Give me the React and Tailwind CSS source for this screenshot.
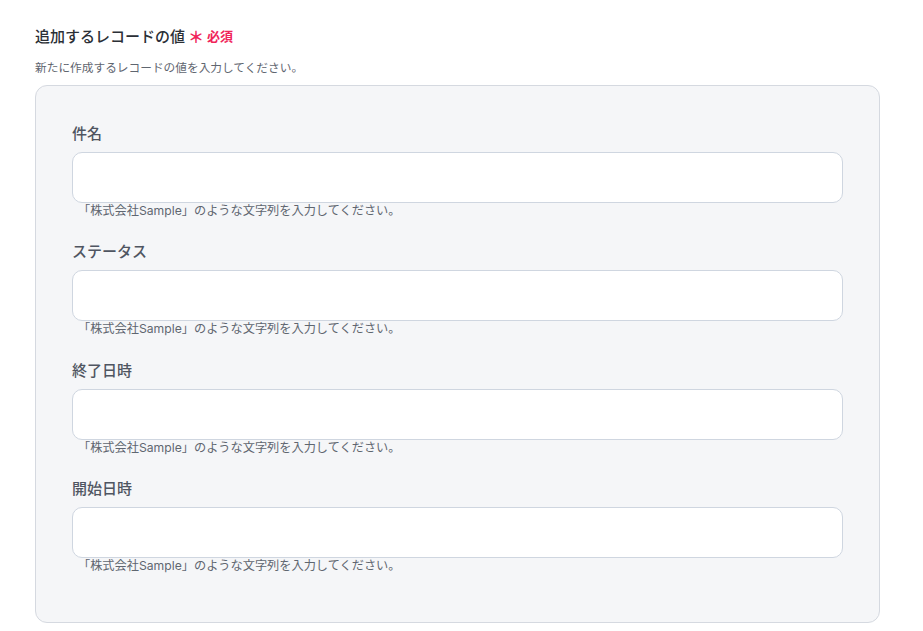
import React from 'react';

const fields = ['件名', 'ステータス', '終了日時', '開始日時'];

const RecordField = ({ label }) => (
    <div className="flex flex-col">
        <label className="text-[15px] leading-5 font-medium text-[#4f5561] mb-2">{label}</label>
        <input
            type="text"
            className="h-[51px] w-full bg-white border border-[#cfd6e0] rounded-[10px] px-4 text-sm outline-none"
        />
        <p className="text-[12.2px] leading-4 text-[#5f6670] pl-[6px]">
            「株式会社Sample」のような文字列を入力してください。
        </p>
    </div>
);

export default function App() {
    return (
        <div
            className="min-h-screen bg-white pt-[26px] pl-[35px] pr-[43px] pb-2"
            style={{ fontFamily: 'Inter, "Noto Sans CJK JP", "Noto Sans", sans-serif' }}
        >
            <div className="flex items-center h-[22px]">
                <h2 className="text-[15px] font-medium text-[#2b2f36]">追加するレコードの値</h2>
                <span className="ml-[3px] mr-[3px] text-[16px] font-bold text-[#f0245a]">＊</span>
                <span className="text-[13px] font-bold text-[#f0245a]">必須</span>
            </div>
            <p className="mt-[12px] text-[11.7px] leading-4 text-[#5f6670]">
                新たに作成するレコードの値を入力してください。
            </p>

            {/* record values */}
            <div className="mt-[9px] bg-[#f5f6f8] border border-[#d5d9e0] rounded-[12px] pt-[38px] pb-[48px] pl-[36px] pr-[36px] flex flex-col gap-[23.3px]">
                {fields.map((f) => (
                    <RecordField key={f} label={f} />
                ))}
            </div>
        </div>
    );
}
